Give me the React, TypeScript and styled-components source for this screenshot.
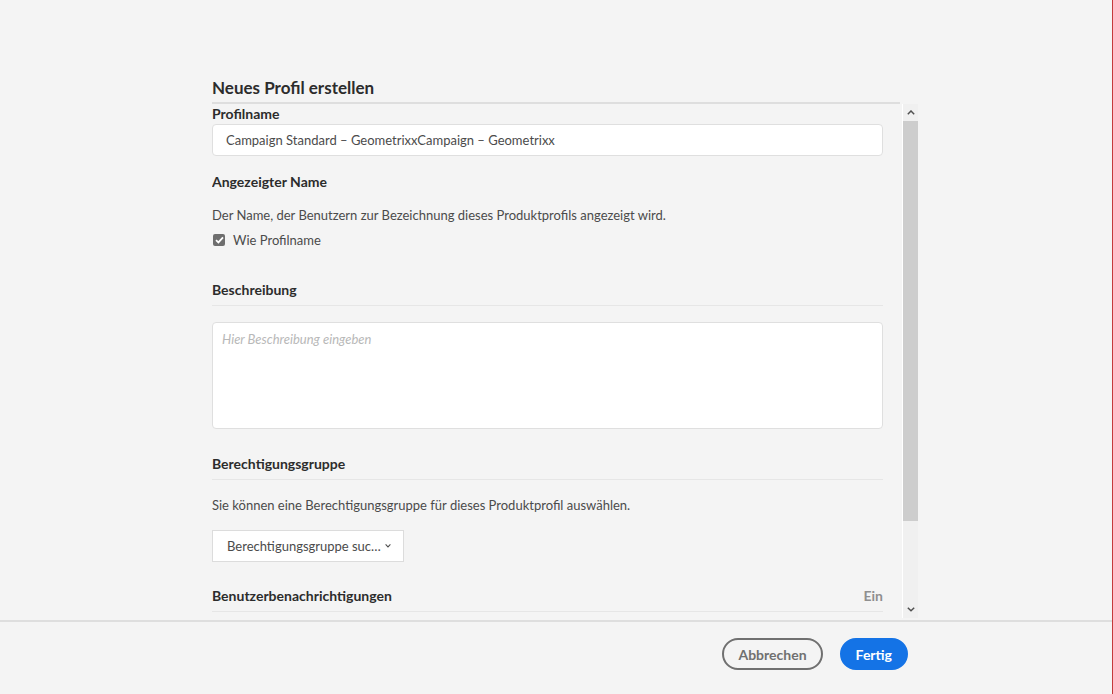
import styled, { createGlobalStyle } from "styled-components";

const GlobalStyle = createGlobalStyle`
    html, body {
        margin: 0;
        padding: 0;
        background: #f4f4f4;
        font-family: Lato, "Open Sans", "Liberation Sans", sans-serif;
    }
`;

const Page = styled.div`
    height: 694px;
    width: 1112px;
    border-right: 1px solid #c4393b;
    display: flex;
    flex-direction: column;
    background: #f4f4f4;
`;

const Main = styled.main`
    flex: 1;
    padding: 77px 0 0 212px;
    display: flex;
    flex-direction: column;
    overflow: hidden;
`;

const Title = styled.h1`
    margin: 0;
    width: 688px;
    font-size: 17px;
    line-height: 22px;
    font-weight: 700;
    color: #2c2c2c;
    padding-bottom: 3px;
    border-bottom: 2px solid #dedede;
`;

const ScrollArea = styled.div`
    display: flex;
    gap: 19px;
    height: 514px;
`;

const Content = styled.div`
    width: 671px;
    overflow: hidden;
    display: flex;
    flex-direction: column;
`;

const Label = styled.div<{ $top?: number; $line?: boolean }>`
    display: flex;
    justify-content: space-between;
    margin-top: ${(p) => p.$top ?? 0}px;
    font-size: 14px;
    line-height: 20px;
    font-weight: 700;
    color: #2c2c2c;
    ${(p) => p.$line && `padding-bottom: 5px; border-bottom: 1px solid #e6e6e6;`}
`;

const Status = styled.span`
    color: #8f8f8f;
`;

const Text = styled.p<{ $top: number }>`
    margin: ${(p) => p.$top}px 0 0;
    font-size: 13px;
    line-height: 20px;
    color: #4b4b4b;
`;

const Input = styled.div`
    height: 30px;
    background: #fff;
    border: 1px solid #dfdfdf;
    border-radius: 4px;
    padding: 0 13px;
    display: flex;
    align-items: center;
    font-size: 13px;
    color: #4b4b4b;
`;

const CheckRow = styled.label`
    margin-top: 5px;
    display: flex;
    align-items: center;
    gap: 8px;
    font-size: 13px;
    line-height: 20px;
    color: #4b4b4b;
`;

const Box = styled.span`
    width: 12px;
    height: 12px;
    border-radius: 2px;
    background: #6e6e6e;
    display: flex;
    align-items: center;
    justify-content: center;
    margin-left: 1px;
`;

const TextArea = styled.div`
    margin-top: 16px;
    background: #fff;
    border: 1px solid #dfdfdf;
    border-radius: 4px;
    padding: 6px 9px;
    box-sizing: border-box;
    height: 107px;
    font-size: 13px;
    line-height: 20px;
    font-style: italic;
    color: #b8b8b8;
`;

const Dropdown = styled.button`
    margin-top: 15px;
    align-self: flex-start;
    width: 192px;
    height: 32px;
    background: #fff;
    border: 1px solid #dcdcdc;
    border-radius: 0;
    padding: 0 0 0 14px;
    display: flex;
    align-items: center;
    gap: 4px;
    font-family: inherit;
    font-size: 13px;
    color: #4b4b4b;
`;

const Scrollbar = styled.div`
    width: 15px;
    border-left: 1px solid #fff;
    background: #f0f0f0;
    display: flex;
    flex-direction: column;
`;

const Arrow = styled.div`
    height: 17px;
    display: flex;
    align-items: center;
    justify-content: center;
`;

const Thumb = styled.div`
    height: 400px;
    background: #cdcdcd;
`;

const Track = styled.div`
    flex: 1;
`;

const Footer = styled.footer`
    height: 56px;
    border-top: 2px solid #dedede;
    display: flex;
    justify-content: flex-end;
    align-items: flex-start;
    gap: 17px;
    padding: 16px 204px 0 0;
`;

const Button = styled.button<{ $primary?: boolean }>`
    height: 32px;
    border-radius: 16px;
    padding: 0 14px;
    font-family: inherit;
    font-size: 14px;
    font-weight: 700;
    border: 2px solid ${(p) => (p.$primary ? "#1473e6" : "#707070")};
    background: ${(p) => (p.$primary ? "#1473e6" : "transparent")};
    color: ${(p) => (p.$primary ? "#fff" : "#707070")};
`;

function Chevron({ up, size = 8 }: { up?: boolean; size?: number }) {
    return (
        <svg width={size} height={size * 0.6} viewBox="0 0 10 6">
            <path
                d={up ? "M1 5.2 L5 1.2 L9 5.2" : "M1 0.8 L5 4.8 L9 0.8"}
                fill="none"
                stroke="#505050"
                strokeWidth="1.8"
            />
        </svg>
    );
}

export default function App() {
    return (
        <>
            <GlobalStyle />
            <Page>
                <Main>
                    <Title>Neues Profil erstellen</Title>
                    <ScrollArea>
                        <Content>
                            <Label>Profilname</Label>
                            <Input>Campaign Standard – GeometrixxCampaign – Geometrixx</Input>
                            <Label $top={16}>Angezeigter Name</Label>
                            <Text $top={13}>Der Name, der Benutzern zur Bezeichnung dieses Produktprofils angezeigt wird.</Text>
                            <CheckRow>
                                <Box>
                                    <svg width="9" height="8" viewBox="0 0 9 8">
                                        <path d="M1 4.2 L3.4 6.4 L8 1.4" fill="none" stroke="#fff" strokeWidth="1.8" />
                                    </svg>
                                </Box>
                                Wie Profilname
                            </CheckRow>
                            <Label $top={30} $line>Beschreibung</Label>
                            <TextArea>Hier Beschreibung eingeben</TextArea>
                            <Label $top={25} $line>Berechtigungsgruppe</Label>
                            <Text $top={15}>Sie können eine Berechtigungsgruppe für dieses Produktprofil auswählen.</Text>
                            <Dropdown>
                                Berechtigungsgruppe suc…
                                <Chevron size={6} />
                            </Dropdown>
                            <Label $top={24} $line>
                                Benutzerbenachrichtigungen
                                <Status>Ein</Status>
                            </Label>
                        </Content>
                        <Scrollbar>
                            <Arrow><Chevron up /></Arrow>
                            <Thumb />
                            <Track />
                            <Arrow><Chevron /></Arrow>
                        </Scrollbar>
                    </ScrollArea>
                </Main>
                <Footer>
                    <Button>Abbrechen</Button>
                    <Button $primary>Fertig</Button>
                </Footer>
            </Page>
        </>
    );
}
